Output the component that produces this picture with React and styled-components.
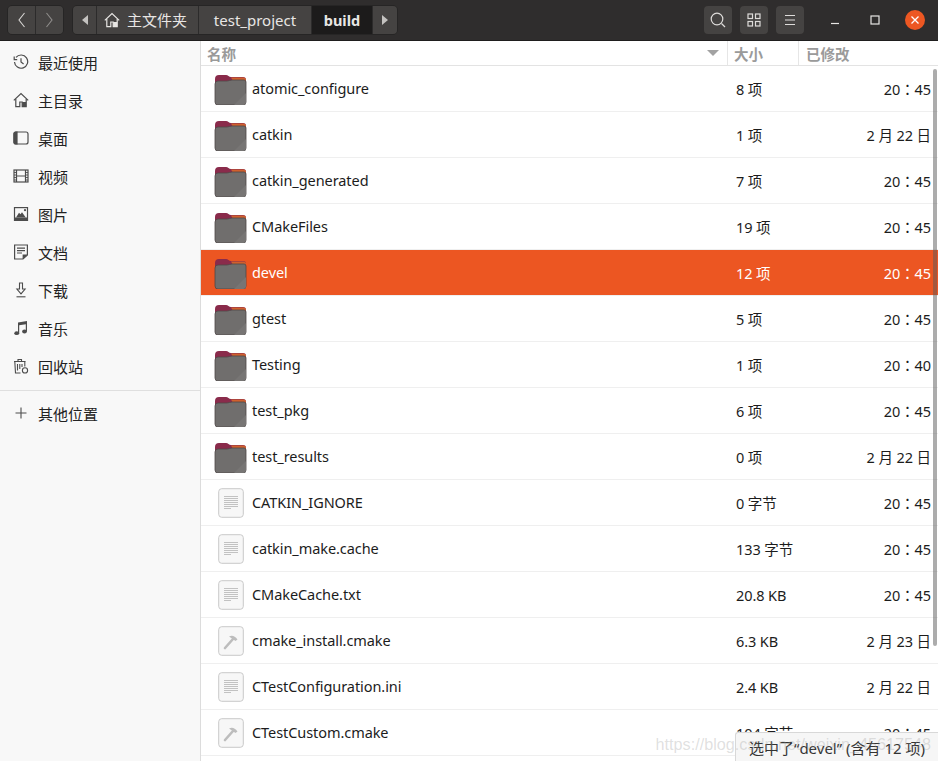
import React from 'react';
import styled, { createGlobalStyle } from 'styled-components';

const FONT = `"Noto Sans", "Noto Sans CJK SC", sans-serif`;

const GlobalStyle = createGlobalStyle`
  html, body { margin: 0; padding: 0; background: #fff; }
  body { font-family: ${FONT}; }
  * { box-sizing: border-box; }
`;

const Window = styled.div`
  position: relative;
  width: 938px;
  height: 761px;
  overflow: hidden;
  display: flex;
  flex-direction: column;
  background: #fff;
`;

const HeaderBar = styled.header`
  height: 41px;
  flex: none;
  background: #2f2d2d;
  border-bottom: 1px solid #1f1e1e;
  display: flex;
  align-items: center;
  padding: 0 3px 0 7px;
`;

const ButtonGroup = styled.div`
  display: flex;
  height: 30px;
  margin-top: -1px;
  border: 1px solid #262525;
  border-radius: 5px;
  overflow: hidden;
  margin-right: ${({ $gap }) => $gap || 0}px;
`;

const GroupButton = styled.div`
  display: flex;
  align-items: center;
  justify-content: center;
  gap: 7px;
  width: ${({ $w }) => $w}px;
  padding-right: ${({ $nudge }) => $nudge || 0}px;
  background: ${({ $active }) => ($active ? '#1c1b1b' : '#454342')};
  color: #e8e6e4;
  font-size: ${({ $active }) => ($active ? 14.5 : 15)}px;
  font-weight: ${({ $active }) => ($active ? 700 : 400)};
  border-right: 1px solid ${({ $last }) => ($last ? 'transparent' : '#2c2b2b')};
`;

const Spacer = styled.div`
  flex: 1;
`;

const ToolButton = styled.div`
  width: 28px;
  height: 28px;
  margin-left: 8px;
  border-radius: 4px;
  background: #454342;
  display: flex;
  align-items: center;
  justify-content: center;
`;

const WindowButton = styled.div`
  width: 40px;
  height: 28px;
  margin-left: ${({ $gap }) => $gap || 0}px;
  display: flex;
  align-items: center;
  justify-content: center;
`;

const CloseCircle = styled.div`
  width: 20px;
  height: 20px;
  border-radius: 50%;
  background: #ed5722;
  display: flex;
  align-items: center;
  justify-content: center;
`;

const Body = styled.div`
  flex: 1;
  display: flex;
  min-height: 0;
`;

const Sidebar = styled.nav`
  width: 201px;
  flex: none;
  background: #f8f8f8;
  border-right: 1px solid #dcdcdc;
  padding-top: 2px;
`;

const SideItem = styled.div`
  height: 38px;
  display: flex;
  align-items: center;
  padding-left: 13px;
  gap: 9px;
  font-size: 15px;
  color: #222;
`;

const SideIcon = styled.svg`
  width: 16px;
  height: 16px;
  flex: none;
  color: ${({ $color }) => $color || '#4c4c4c'};
`;

const SideDivider = styled.div`
  height: 1px;
  background: #dfdfdf;
  margin: 5px 0 3px;
`;

const Main = styled.main`
  flex: 1;
  min-width: 0;
  display: flex;
  flex-direction: column;
  overflow: hidden;
`;

const ColumnHeader = styled.div`
  height: 25px;
  flex: none;
  display: flex;
  border-bottom: 1px solid #e3e3e3;
  color: #9a9a9a;
  font-size: 14.5px;
  font-weight: 700;
`;

const HeaderCell = styled.div`
  width: ${({ $w }) => $w}px;
  flex: ${({ $grow }) => ($grow ? 1 : 'none')};
  display: flex;
  align-items: center;
  padding-left: ${({ $pad }) => $pad}px;
  border-right: 1px solid ${({ $last }) => ($last ? 'transparent' : '#e6e6e6')};
`;

const SortArrow = styled.span`
  margin-left: auto;
  margin-right: 8px;
  width: 0;
  height: 0;
  border-left: 6px solid transparent;
  border-right: 6px solid transparent;
  border-top: 6px solid #a2a2a2;
`;

const Row = styled.div`
  height: 46px;
  flex: none;
  display: flex;
  align-items: center;
  border-bottom: 1px solid #efefef;
  background: ${({ $selected }) => ($selected ? '#ec5622' : '#fff')};
  color: ${({ $selected }) => ($selected ? '#fff' : '#1c1c1c')};
  font-size: 14.5px;
`;

const IconSlot = styled.div`
  width: 51px;
  flex: none;
  display: flex;
  justify-content: center;
  padding-left: 8px;
`;

const FileName = styled.div`
  flex: 1;
  padding-bottom: 2px;
  letter-spacing: -0.07px;
`;

const FileSize = styled.div`
  width: 102px;
  flex: none;
  letter-spacing: -0.1px;
`;

const FileDate = styled.div`
  width: 100px;
  flex: none;
  text-align: right;
  padding-right: 7px;
  letter-spacing: -0.1px;
  font-family: "Noto Sans", "Noto Sans CJK TC", sans-serif;
`;

const Scrollbar = styled.div`
  position: absolute;
  right: 1px;
  top: 69px;
  width: 4px;
  height: 577px;
  border-radius: 2px;
  background: rgba(90, 90, 90, 0.5);
`;

const StatusPill = styled.div`
  position: absolute;
  right: 0;
  bottom: 0;
  width: 203px;
  height: 29px;
  padding-left: 13px;
  display: flex;
  align-items: center;
  background: #f6f6f6;
  border: 1px solid #d8d8d8;
  border-right: none;
  border-bottom: none;
  border-top-left-radius: 3px;
  color: #333;
  font-size: 15px;
  white-space: nowrap;
`;

const Watermark = styled.div`
  position: absolute;
  right: 7px;
  bottom: 7px;
  font-family: "Liberation Sans", sans-serif;
  font-size: 16.2px;
  color: rgba(150, 150, 150, 0.3);
  white-space: nowrap;
`;

const ClockIcon = () => (
  <SideIcon viewBox="0 0 16 16" fill="none" stroke="currentColor" strokeWidth="1.2">
    <path d="M3 3.4A6.6 6.6 0 1 1 1.5 8" />
    <path d="M1.2 2.6v3h3" />
    <path d="M8 4.2V8l2.6 2" />
  </SideIcon>
);

const HomeIcon = ({ color }) => (
  <SideIcon $color={color} viewBox="0 0 16 16" fill="none" stroke="currentColor" strokeWidth="1.2">
    <path d="M.8 8.4 8 1.6l7.2 6.8" />
    <path d="M2.8 7v7.6h4V10h2.4v4.6h4V7" />
    <path d="M9.2 10h4v4.6h-4z" fill="currentColor" stroke="none" />
  </SideIcon>
);

const DesktopIcon = () => (
  <SideIcon viewBox="0 0 16 16" fill="none" stroke="currentColor" strokeWidth="1.2">
    <rect x="1" y="2" width="14" height="12" rx="2" />
    <path d="M1 3.5A1.5 1.5 0 0 1 2.5 2H4v12H2.5A1.5 1.5 0 0 1 1 12.5z" fill="currentColor" />
  </SideIcon>
);

const FilmIcon = () => (
  <SideIcon viewBox="0 0 16 16" fill="none" stroke="currentColor" strokeWidth="1.2">
    <rect x="1" y="2" width="14" height="12" />
    <path d="M3.5 2v12M12.5 2v12M3.5 8h9" />
    <path d="M1 4.5h2.5M1 7h2.5M1 9.5h2.5M1 12h2.5M12.5 4.5H15M12.5 7H15M12.5 9.5H15M12.5 12H15" strokeWidth="0.9" />
  </SideIcon>
);

const PictureIcon = () => (
  <SideIcon viewBox="0 0 16 16" fill="none" stroke="currentColor" strokeWidth="1.2">
    <rect x="1.5" y="1.6" width="13" height="12.8" />
    <path d="M1.5 11.5h13v2.9h-13z" fill="currentColor" stroke="none" />
    <path d="M3 11.5 6 6.8l1.5 1.4L9 6.3l3.8 5.2z" fill="currentColor" stroke="none" />
    <circle cx="12" cy="4.2" r="1.1" fill="currentColor" stroke="none" />
  </SideIcon>
);

const DocIcon = () => (
  <SideIcon viewBox="0 0 16 16" fill="none" stroke="currentColor" strokeWidth="1.2">
    <path d="M1.6 1h12.8v10L10 15H1.6z" />
    <path d="M4 4.2h8M4 6.6h8M4 9h5" />
    <path d="M14.4 10.5H9.6V15z" fill="currentColor" stroke="none" />
  </SideIcon>
);

const DownloadIcon = () => (
  <SideIcon viewBox="0 0 16 16" fill="none" stroke="currentColor" strokeWidth="1.1">
    <path d="M6.5 1h3v6h2.6L8 11.8 3.9 7h2.6z" />
    <path d="M3.5 14.8h9" />
  </SideIcon>
);

const MusicIcon = () => (
  <SideIcon viewBox="0 0 16 16" fill="currentColor">
    <path d="M5 2.5 14 1v10.5h-1.2V4.2L6.2 5.3v8.2H5z" />
    <ellipse cx="3.7" cy="13.2" rx="2.4" ry="1.9" />
    <ellipse cx="11.5" cy="11.5" rx="2.4" ry="1.9" />
  </SideIcon>
);

const TrashIcon = () => (
  <SideIcon viewBox="0 0 16 16" fill="none" stroke="currentColor" strokeWidth="1.1">
    <path d="M1 3.5h11.5M5 3.3V1.5h3.5v1.8" />
    <path d="M1.8 3.5 2.5 15h5" />
    <path d="M11.8 3.5v5" />
    <path d="M4.5 6v6.5M6.8 6v5M9 6v3" />
    <circle cx="12" cy="12.4" r="2.6" />
  </SideIcon>
);

const PlusIcon = () => (
  <SideIcon viewBox="0 0 16 16" fill="none" stroke="currentColor" strokeWidth="1.1">
    <path d="M8 2.5v11M2.5 8h11" />
  </SideIcon>
);

const FolderIcon = () => (
  <svg width="33" height="32" viewBox="0 0 33 32">
    <path d="M1 6a4 4 0 0 1 4-4h7c2 0 3 2 5 2h12a3 3 0 0 1 3 3v6H1z" fill="#8a2b4b" />
    <path d="M17 4.500h12.500A2.500 2.500 0 0 1 32 7v1H19z" fill="#d0602e" />
    <path d="M1 11a3 3 0 0 1 3-3h9c2 0 3-1 5-1h12a2 2 0 0 1 2 2v20a3 3 0 0 1-3 3H4a3 3 0 0 1-3-3z" fill="#706e6d" stroke="#4f4747" strokeWidth="0.8" />
    <path d="M32 20v9a3 3 0 0 1-3 3H20z" fill="#777574" />
  </svg>
);

const DocFrame = styled.svg`
  display: block;
`;

const TextFileIcon = () => (
  <DocFrame width="26" height="30" viewBox="0 0 26 30">
    <rect x="0.7" y="0.7" width="24.6" height="28.6" rx="3" fill="#f7f7f7" stroke="#c9c9c9" />
    <path d="M6 8.5h14M6 10.5h14M6 12.5h14M6 14.5h14M6 16.5h14M6 18.5h14M6 20.5h7" stroke="#c2c2c2" strokeWidth="1" />
  </DocFrame>
);

const ScriptFileIcon = () => (
  <DocFrame width="26" height="30" viewBox="0 0 26 30">
    <rect x="0.7" y="0.7" width="24.6" height="28.6" rx="3" fill="#f7f7f7" stroke="#c9c9c9" />
    <path d="M7 22 15 13" stroke="#bdbdbd" strokeWidth="2.6" strokeLinecap="round" />
    <path d="M11 10.5c3-1.6 5.5-1 8.5 3l-2 1.500-6.500-4.500z" fill="#bdbdbd" />
  </DocFrame>
);

const FILES = [
  { name: 'atomic_configure', size: '8 项', date: '20：45', kind: 'folder' },
  { name: 'catkin', size: '1 项', date: '2 月 22 日', kind: 'folder' },
  { name: 'catkin_generated', size: '7 项', date: '20：45', kind: 'folder' },
  { name: 'CMakeFiles', size: '19 项', date: '20：45', kind: 'folder' },
  { name: 'devel', size: '12 项', date: '20：45', kind: 'folder', selected: true },
  { name: 'gtest', size: '5 项', date: '20：45', kind: 'folder' },
  { name: 'Testing', size: '1 项', date: '20：40', kind: 'folder' },
  { name: 'test_pkg', size: '6 项', date: '20：45', kind: 'folder' },
  { name: 'test_results', size: '0 项', date: '2 月 22 日', kind: 'folder' },
  { name: 'CATKIN_IGNORE', size: '0 字节', date: '20：45', kind: 'text' },
  { name: 'catkin_make.cache', size: '133 字节', date: '20：45', kind: 'text' },
  { name: 'CMakeCache.txt', size: '20.8 KB', date: '20：45', kind: 'text' },
  { name: 'cmake_install.cmake', size: '6.3 KB', date: '2 月 23 日', kind: 'script' },
  { name: 'CTestConfiguration.ini', size: '2.4 KB', date: '2 月 22 日', kind: 'text' },
  { name: 'CTestCustom.cmake', size: '104 字节', date: '20：45', kind: 'script' },
];

const PLACES = [
  ['最近使用', ClockIcon],
  ['主目录', HomeIcon],
  ['桌面', DesktopIcon],
  ['视频', FilmIcon],
  ['图片', PictureIcon],
  ['文档', DocIcon],
  ['下载', DownloadIcon],
  ['音乐', MusicIcon],
  ['回收站', TrashIcon],
];

const FILE_ICONS = { folder: FolderIcon, text: TextFileIcon, script: ScriptFileIcon };

const App = () => (
  <Window>
    <GlobalStyle />
    <HeaderBar>
      <ButtonGroup $gap={8}>
        <GroupButton $w={28}>
          <svg width="10" height="16" viewBox="0 0 10 16" fill="none" stroke="#d8d6d4" strokeWidth="1.1"><path d="M7.5 1 2 8l5.5 7" /></svg>
        </GroupButton>
        <GroupButton $w={27} $last>
          <svg width="10" height="16" viewBox="0 0 10 16" fill="none" stroke="#8f8d8b" strokeWidth="1.1"><path d="M2.5 1 8 8l-5.5 7" /></svg>
        </GroupButton>
      </ButtonGroup>
      <ButtonGroup>
        <GroupButton $w={24}>
          <svg width="6" height="10" viewBox="0 0 6 10" fill="#c4c2c0"><path d="M6 0v10L0 5z" /></svg>
        </GroupButton>
        <GroupButton $w={102} $nudge={4}>
          <HomeIcon color="#e8e6e4" />
          主文件夹
        </GroupButton>
        <GroupButton $w={113}>test_project</GroupButton>
        <GroupButton $w={61} $active>build</GroupButton>
        <GroupButton $w={24} $last>
          <svg width="6" height="10" viewBox="0 0 6 10" fill="#c4c2c0"><path d="M0 0v10l6-5z" /></svg>
        </GroupButton>
      </ButtonGroup>
      <Spacer />
      <ToolButton>
        <svg width="16" height="16" viewBox="0 0 16 16" fill="none" stroke="#dedcda" strokeWidth="1.2"><circle cx="7" cy="7" r="5.8" /><path d="m11.5 11.5 3.5 3.5" /></svg>
      </ToolButton>
      <ToolButton>
        <svg width="14" height="14" viewBox="0 0 14 14" fill="none" stroke="#dedcda" strokeWidth="1.2"><rect x="1" y="1" width="4.5" height="4.5" /><rect x="8.5" y="1" width="4.5" height="4.5" /><rect x="1" y="8.5" width="4.5" height="4.5" /><rect x="8.5" y="8.5" width="4.5" height="4.5" /></svg>
      </ToolButton>
      <ToolButton>
        <svg width="14" height="14" viewBox="0 0 14 14" fill="none" stroke="#dedcda" strokeWidth="1.1"><path d="M2 2.5h10M2 7h10M2 11.5h10" /></svg>
      </ToolButton>
      <WindowButton $gap={11}>
        <svg width="10" height="10" viewBox="0 0 10 10" stroke="#e8e6e4" strokeWidth="1.2"><path d="M1 8.5h8" /></svg>
      </WindowButton>
      <WindowButton>
        <svg width="10" height="10" viewBox="0 0 10 10" fill="none" stroke="#e8e6e4" strokeWidth="1.2"><rect x="1" y="1" width="8" height="8" /></svg>
      </WindowButton>
      <WindowButton>
        <CloseCircle>
          <svg width="10" height="10" viewBox="0 0 10 10" stroke="#fff" strokeWidth="1.3"><path d="m1.5 1.5 7 7M8.5 1.5l-7 7" /></svg>
        </CloseCircle>
      </WindowButton>
    </HeaderBar>
    <Body>
      <Sidebar>
        {PLACES.map(([label, Icon]) => (
          <SideItem key={label}>
            <Icon />
            {label}
          </SideItem>
        ))}
        <SideDivider />
        <SideItem>
          <PlusIcon />
          其他位置
        </SideItem>
      </Sidebar>
      <Main>
        <ColumnHeader>
          <HeaderCell $grow $pad={6}>
            名称
            <SortArrow />
          </HeaderCell>
          <HeaderCell $w={71} $pad={6}>大小</HeaderCell>
          <HeaderCell $w={139} $pad={7} $last>已修改</HeaderCell>
        </ColumnHeader>
        {FILES.map((file) => {
          const Icon = FILE_ICONS[file.kind];
          return (
            <Row key={file.name} $selected={file.selected}>
              <IconSlot>
                <Icon />
              </IconSlot>
              <FileName>{file.name}</FileName>
              <FileSize>{file.size}</FileSize>
              <FileDate>{file.date}</FileDate>
            </Row>
          );
        })}
      </Main>
    </Body>
    <Scrollbar />
    <StatusPill>选中了“devel” (含有 12 项)</StatusPill>
    <Watermark>https://blog.csdn.net/weixin_45617548</Watermark>
  </Window>
);

export default App;
